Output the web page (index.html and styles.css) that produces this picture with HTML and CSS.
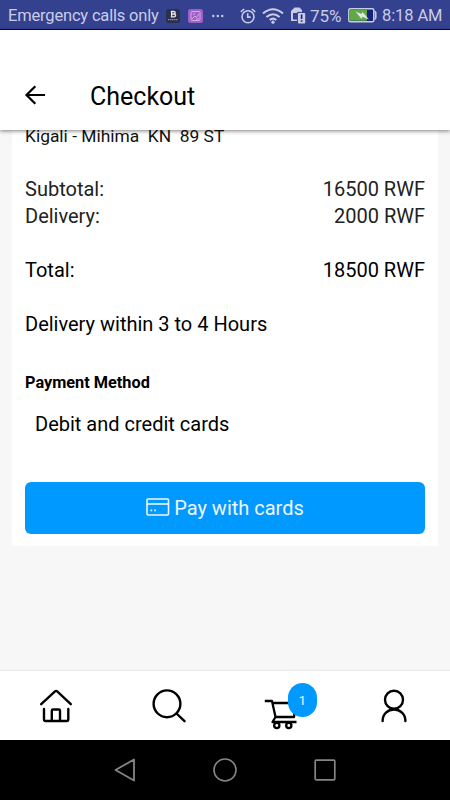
FILE: index.html
```html
<!DOCTYPE html>
<html lang="en">
<head>
<meta charset="utf-8">
<meta name="viewport" content="width=device-width, initial-scale=1">
<title>Checkout</title>
<link rel="stylesheet" href="styles.css">
</head>
<body>
<div class="screen">
  <div class="status">
    <span class="carrier">Emergency calls only</span>
    <svg class="app-a" width="14" height="14" viewBox="0 0 14 14"><rect width="14" height="14" rx="2.5" fill="#2b304b"/><path d="M4.8 2.500h3q1.400 0 1.400 1.200T7.800 5h-2.200M7.800 5q1.800 0 1.800 1.400T7.800 7.800h-3M5.600 2.500v5.300" fill="none" stroke="#e4e6f2" stroke-width="1.300"/><path d="M2 10.700h10" stroke="#9a9eb5" stroke-dasharray="1.500 .4"/></svg>
    <svg class="app-b" width="15" height="14" viewBox="0 0 15 14"><rect width="15" height="14" rx="2.500" fill="#9f5fc5"/><g fill="none" stroke="#d5aee8"><rect x="3" y="2.500" width="9" height="9" rx="1"/><path d="M4 10l3-3 1.500 1.500L11 5M5 5h2M8 10h3"/></g></svg>
    <svg class="dots" width="12" height="4" viewBox="0 0 12 4"><g fill="#c9cce6"><circle cx="1.300" cy="2" r="1.200"/><circle cx="5.800" cy="2" r="1.200"/><circle cx="10.300" cy="2" r="1.200"/></g></svg>
    <svg class="alarm" width="16" height="16" viewBox="0 0 16 16"><g fill="none" stroke="#c9cce6" stroke-width="1.600"><circle cx="8" cy="8.700" r="6"/><path d="M7.700 5.200v3.900h3M.8 3.800L4.200 1M15.200 3.800L11.800 1"/></g></svg>
    <svg class="wifi" width="22" height="16" viewBox="0 0 22 16"><g fill="none" stroke="#c9cce6" stroke-width="2"><path d="M1 5.600q10-8.600 20 0M4.400 9q6.600-5.600 13.200 0M7.700 12q3.300-2.700 6.600 0"/></g><circle cx="11" cy="14.200" r="1.600" fill="#c9cce6"/></svg>
    <svg class="sim" width="16" height="17" viewBox="0 0 16 17"><path d="M4.500 .5H9.500L12 3V6H8V14H1V4z" fill="#c9cce6"/><path d="M3 6h4v6.500H3z" fill="#34418f"/><path d="M7.400 15V5.400H13" fill="none" stroke="#34418f"/><rect x="8" y="6" width="7.200" height="10.500" rx=".8" fill="#c9cce6"/><path d="M11.600 7.500v4.500M11.600 13.200v1.600" stroke="#14227c" stroke-width="1.600"/></svg>
    <span class="percent">75%</span>
    <svg class="battery" width="29" height="15" viewBox="0 0 29 15"><rect x=".8" y=".8" width="25" height="13" rx="1.500" fill="#14227c" stroke="#c9cce6" stroke-width="1.500"/><path d="M2 2h17v10.700H2z" fill="#61a944"/><path d="M26.500 3.500q1.300 0 1.300 1.500v4.500q0 1.500-1.300 1.500" fill="none" stroke="#c9cce6" stroke-width="1.500"/><path d="M7.500 3.500l6 2.500 1-2 6.500 7.500-6.500-2.800-1.200 2z" fill="#e3e5f2"/></svg>
    <span class="clock">8:18 AM</span>
  </div>
  <header class="header">
    <svg class="back" width="22" height="22" viewBox="0 0 22 22"><path d="M21 11H2.500M11.300 2.200L2.500 11l8.800 8.800" fill="none" stroke="#000" stroke-width="2.200"/></svg>
    <h1 class="title">Checkout</h1>
  </header>
  <main class="content">
    <section class="card">
      <p class="address">Kigali - Mihima&nbsp; KN&nbsp; 89 ST</p>
      <div class="row"><span>Subtotal:</span><span>16500 RWF</span></div>
      <div class="row"><span>Delivery:</span><span>2000 RWF</span></div>
      <div class="row total"><span>Total:</span><span>18500 RWF</span></div>
      <p class="eta">Delivery within 3 to 4 Hours</p>
      <h2 class="method">Payment Method</h2>
      <p class="option">Debit and credit cards</p>
      <button class="pay"><svg width="24" height="18" viewBox="0 0 24 18"><rect x="1" y="1" width="21.500" height="16" rx="1" fill="none" stroke="#eef6ff" stroke-width="1.600"/><path d="M1 6h21.500" stroke="#eef6ff" stroke-width="1.600"/><path d="M4.500 12.300h1.700M8.200 12.300h1.700" stroke="#eef6ff" stroke-width="1.700"/></svg><span>Pay with cards</span></button>
    </section>
  </main>
  <nav class="tabs">
    <div class="tab"><svg width="34" height="36" viewBox="0 0 34 36"><g fill="none" stroke="#000" stroke-width="2.400" stroke-linecap="round" stroke-linejoin="round"><path d="M2.200 17.200L16 4.400q1.100-1 2.200 0L31.800 17.200M5 22v10.300q0 1.700 1.700 1.700h20.900q1.700 0 1.700-1.700V22M12.800 34V23.700q0-1.200 1.200-1.200h5.800q1.200 0 1.200 1.200V34"/></g></svg></div>
    <div class="tab"><svg width="34" height="36" viewBox="0 0 34 36"><g fill="none" stroke="#000" stroke-width="2.400" stroke-linecap="round"><circle cx="15" cy="16.800" r="13.400"/><path d="M24.500 26.500L32.500 34.200"/></g></svg></div>
    <div class="tab cart"><svg width="34" height="38" viewBox="0 0 34 38"><g fill="none" stroke="#000" stroke-width="2.300" stroke-linejoin="round"><path d="M.8 9h7.200L11.500 25 8.500 30H32.500M8.500 11H32L30 25H11.500"/><circle cx="12.800" cy="33.500" r="2.600"/><circle cx="24.800" cy="33.500" r="2.600"/></g></svg><span class="badge">1</span></div>
    <div class="tab"><svg width="34" height="36" viewBox="0 0 34 36"><g fill="none" stroke="#000" stroke-width="2.400" stroke-linecap="round"><circle cx="17" cy="12.700" r="9"/><path d="M5.600 34C5.600 27 10.800 22.500 17 22.500S28.400 27 28.400 34"/></g></svg></div>
  </nav>
  <div class="system">
    <svg width="24" height="26" viewBox="0 0 24 26"><path d="M2.500 13L21 2.500V23.500z" fill="none" stroke="#858585" stroke-width="1.800" stroke-linejoin="round"/></svg>
    <svg width="24" height="26" viewBox="0 0 24 26"><circle cx="12" cy="13" r="11" fill="none" stroke="#858585" stroke-width="1.600"/></svg>
    <svg width="24" height="26" viewBox="0 0 24 26"><rect x="2.200" y="3.200" width="19.600" height="19.600" rx="1" fill="none" stroke="#858585" stroke-width="1.700"/></svg>
  </div>
</div>
</body>
</html>
```
FILE: styles.css
```css
* { box-sizing: border-box; }
body, h1, h2, p { margin: 0; }
body { font-family: Roboto, "Liberation Sans", sans-serif; color: #000; }
svg { display: block; flex: none; }
.screen { width: 450px; height: 800px; display: flex; flex-direction: column; overflow: hidden; background: #f7f7f7; }
.status { height: 30px; flex: none; display: flex; align-items: center; padding: 2px 0 0 8px; background: #34418f; border-bottom: 1px solid #00006b; color: #c9cce6; font-size: 16.5px; white-space: nowrap; }
.status span { flex: none; line-height: 20px; padding-top: 1px; }
.carrier { width: 158px; letter-spacing: -.18px; }
.app-b { margin-left: 8px; }
.dots { margin-left: 9px; }
.alarm { margin-left: 16px; }
.wifi { margin-left: 6px; }
.sim { margin-left: 6px; }
.percent { width: 38px; margin-left: 4px; font-size: 17px; }
.clock { margin-left: 5px; letter-spacing: -.1px; }
.header { position: relative; z-index: 1; height: 100px; flex: none; display: flex; align-items: center; padding: 34px 24px 0; background: #fff; box-shadow: 0 1px 4px rgba(0,0,0,.5); }
.back { margin-bottom: 4px; }
.title { margin-left: 44px; font-size: 25px; font-weight: 400; line-height: 30px; }
.content { flex: 1; min-height: 0; padding: 0 12px; overflow: hidden; }
.card { height: 416px; padding: 0 13px; background: #fff; font-size: 20px; line-height: 27px; }
.address { height: 46px; font-size: 17.4px; line-height: 13px; color: #111; }
.row { display: flex; justify-content: space-between; color: #222; }
.total { margin-top: 27px; color: #000; }
.eta { margin-top: 27px; }
.method { margin-top: 33px; font-size: 16.3px; line-height: 24px; font-weight: 700; }
.option { margin-top: 16px; padding-left: 10px; }
.pay { display: flex; width: 400px; height: 52px; margin-top: 44px; padding: 0; align-items: center; justify-content: center; gap: 4px; border: 0; border-radius: 6px; background: #0099ff; color: #eef6ff; font: 400 20px/27px Roboto, sans-serif; }
.pay svg { margin-bottom: 2px; }
.tabs { height: 69px; flex: none; display: flex; padding-bottom: 1px; background: #fff; box-shadow: 0 -1px 1px rgba(0,0,0,.05); }
.tab { position: relative; width: 112.5px; display: flex; align-items: center; justify-content: center; }
.badge { position: absolute; left: 62.5px; top: 12px; width: 29.5px; height: 34px; border-radius: 15px; background: #0099ff; color: #eef6ff; font-size: 13.5px; line-height: 35px; text-align: center; }
.cart svg { margin-top: 12px; }
.system { height: 60px; flex: none; display: flex; align-items: center; justify-content: center; gap: 76px; background: #000; }
```
